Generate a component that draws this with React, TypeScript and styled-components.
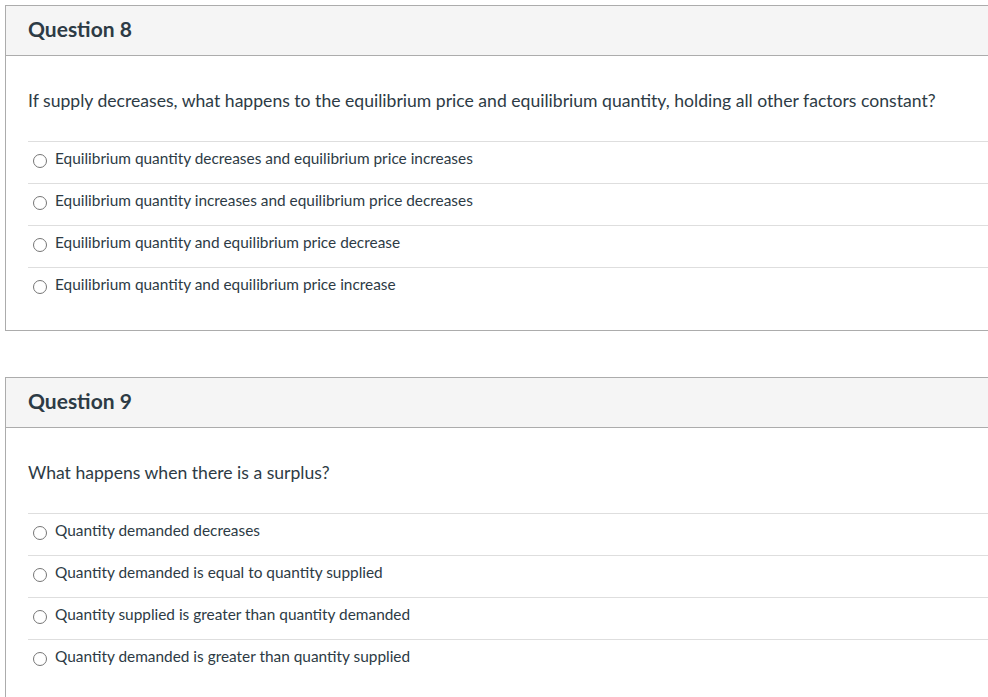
import styled, { createGlobalStyle } from "styled-components";

const GlobalStyle = createGlobalStyle`
  html, body {
    margin: 0;
    padding: 0;
    overflow: hidden;
    background: #ffffff;
  }
  body {
    font-family: Lato, "Liberation Sans", sans-serif;
    color: #2d3b45;
  }
`;

type QuestionData = {
  title: string;
  text: string;
  answers: string[];
};

const questions: QuestionData[] = [
  {
    title: "Question 8",
    text: "If supply decreases, what happens to the equilibrium price and equilibrium quantity, holding all other factors constant?",
    answers: [
      "Equilibrium quantity decreases and equilibrium price increases",
      "Equilibrium quantity increases and equilibrium price decreases",
      "Equilibrium quantity and equilibrium price decrease",
      "Equilibrium quantity and equilibrium price increase",
    ],
  },
  {
    title: "Question 9",
    text: "What happens when there is a surplus?",
    answers: [
      "Quantity demanded decreases",
      "Quantity demanded is equal to quantity supplied",
      "Quantity supplied is greater than quantity demanded",
      "Quantity demanded is greater than quantity supplied",
    ],
  },
];

export default function App() {
  return (
    <>
      <GlobalStyle />
      <Page>
        {questions.map((q) => (
          <Card key={q.title}>
            <CardHeader>
              <HeaderTitle>{q.title}</HeaderTitle>
            </CardHeader>
            <CardBody>
              <QuestionText>{q.text}</QuestionText>
              <AnswerList>
                {q.answers.map((a) => (
                  <AnswerRow key={a}>
                    <Radio />
                    <AnswerLabel>{a}</AnswerLabel>
                  </AnswerRow>
                ))}
              </AnswerList>
            </CardBody>
          </Card>
        ))}
      </Page>
    </>
  );
}

const Page = styled.main`
  display: flex;
  flex-direction: column;
  gap: 46px;
  padding: 5px 0 0 5px;
`;

const Card = styled.section`
  width: calc(100vw + 40px);
  border: 1px solid #acacac;
  border-right: none;
  box-sizing: border-box;
`;

const CardHeader = styled.header`
  display: flex;
  align-items: center;
  height: 50px;
  padding: 0 22px 3px;
  box-sizing: border-box;
  background-color: #f5f5f5;
  border-bottom: 1px solid #acacac;
`;

const HeaderTitle = styled.h2`
  margin: 0;
  font-size: 21px;
  line-height: 26px;
  font-weight: 700;
  color: #2d3b45;
`;

const CardBody = styled.div`
  padding: 32px 0 21px 22px;
`;

const QuestionText = styled.p`
  margin: 0 0 28px;
  font-size: 17.6px;
  line-height: 25px;
`;

const AnswerList = styled.ul`
  list-style: none;
  margin: 0;
  padding: 0;
`;

const AnswerRow = styled.li`
  display: flex;
  align-items: flex-start;
  gap: 8px;
  height: 42px;
  padding: 6px 0 0 5px;
  border-top: 1px solid #dedede;
  box-sizing: border-box;
`;

const Radio = styled.span`
  width: 14px;
  height: 14px;
  margin-top: 6px;
  border: 1px solid #767676;
  border-radius: 50%;
  box-sizing: border-box;
  flex-shrink: 0;
`;

const AnswerLabel = styled.span`
  font-size: 15.4px;
  line-height: 20px;
  color: #2d3b45;
`;
